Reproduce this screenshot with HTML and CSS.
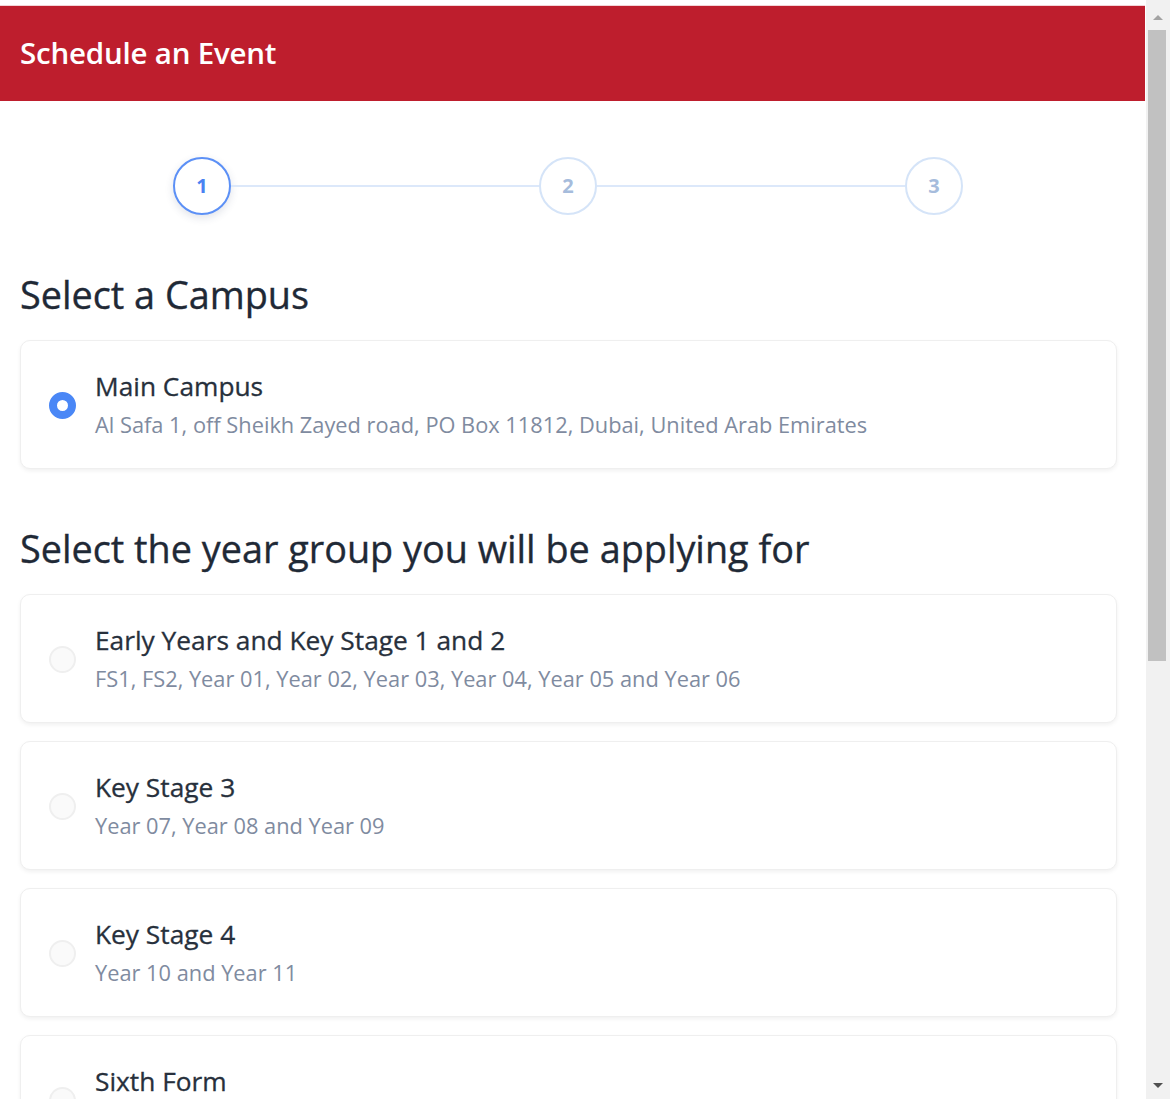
FILE: index.html
```html
<!DOCTYPE html>
<html lang="en">
<head>
<meta charset="utf-8">
<title>Schedule an Event</title>
<link rel="stylesheet" href="styles.css">
</head>
<body>
<div class="window">
  <div class="main">
    <header class="header">
      <h1 class="header-title">Schedule an Event</h1>
    </header>
    <div class="content">
      <div class="stepper">
        <div class="step step-active">1</div>
        <div class="step-line"></div>
        <div class="step">2</div>
        <div class="step-line"></div>
        <div class="step">3</div>
      </div>

      <h2 class="section-title section-title-first">Select a Campus</h2>
      <div class="card">
        <span class="radio radio-checked"></span>
        <div class="card-text">
          <div class="card-title">Main Campus</div>
          <div class="card-sub">Al Safa 1, off Sheikh Zayed road, PO Box 11812, Dubai, United Arab Emirates</div>
        </div>
      </div>

      <h2 class="section-title section-title-second">Select the year group you will be applying for</h2>
      <div class="card-list">
        <div class="card">
          <span class="radio"></span>
          <div class="card-text">
            <div class="card-title">Early Years and Key Stage 1 and 2</div>
            <div class="card-sub">FS1, FS2, Year 01, Year 02, Year 03, Year 04, Year 05 and Year 06</div>
          </div>
        </div>
        <div class="card">
          <span class="radio"></span>
          <div class="card-text">
            <div class="card-title">Key Stage 3</div>
            <div class="card-sub">Year 07, Year 08 and Year 09</div>
          </div>
        </div>
        <div class="card">
          <span class="radio"></span>
          <div class="card-text">
            <div class="card-title">Key Stage 4</div>
            <div class="card-sub">Year 10 and Year 11</div>
          </div>
        </div>
        <div class="card">
          <span class="radio"></span>
          <div class="card-text">
            <div class="card-title">Sixth Form</div>
            <div class="card-sub">Year 12 and Year 13</div>
          </div>
        </div>
      </div>
    </div>
  </div>
  <div class="scrollbar">
    <div class="sb-arrow sb-up"></div>
    <div class="sb-track"><div class="sb-thumb"></div></div>
    <div class="sb-arrow sb-down"></div>
  </div>
</div>
</body>
</html>
```

FILE: styles.css
```css
* { box-sizing: border-box; }
html, body { margin: 0; padding: 0; }
body {
  background: #ffffff;
  font-family: "Open Sans", "Noto Sans", "Liberation Sans", sans-serif;
  color: #222c3a;
}
.window {
  display: flex;
  width: 1170px;
  height: 1099px;
  overflow: hidden;
}
.main {
  width: 1146px;
  flex: none;
  padding-top: 6px;
  overflow: hidden;
}
.header {
  background: #be1e2d;
  height: 95px;
  width: 1145px;
  display: flex;
  align-items: center;
  padding-left: 20px;
  padding-bottom: 2px;
  box-shadow: 0 -1px 0 #f3d3d6;
}
.header-title {
  margin: 0;
  color: #ffffff;
  font-size: 29.5px;
  font-weight: 600;
  letter-spacing: -0.2px;
}
.content {
  padding: 0 29px 0 20px;
}
.stepper {
  display: flex;
  align-items: center;
  width: 790px;
  margin: 56px 0 0 153px;
}
.step {
  width: 58px;
  height: 58px;
  border-radius: 50%;
  border: 2px solid #d5e4f8;
  display: flex;
  align-items: center;
  justify-content: center;
  font-size: 20px;
  font-weight: 700;
  color: #a6bcdc;
  background: #fff;
  flex: none;
  padding-bottom: 2px;
}
.step-active {
  border-color: #5c90f6;
  color: #4a82f2;
  box-shadow: 0 3px 8px rgba(40, 60, 100, 0.14);
}
.step-line {
  flex: 1;
  height: 2px;
  background: #dce8fa;
}
.section-title {
  margin: 0;
  font-size: 37.8px;
  font-weight: 400;
  line-height: 46px;
  color: #1f2936;
  -webkit-text-stroke: 0.35px #1f2936;
}
.section-title-first { margin-top: 57px; margin-bottom: 22px; }
.section-title-second { margin-top: 57px; margin-bottom: 22px; }
.card-list {
  display: flex;
  flex-direction: column;
  gap: 18px;
}
.card {
  display: flex;
  align-items: center;
  gap: 19px;
  width: 1097px;
  height: 129px;
  padding: 0 28px 2px;
  border: 1px solid #efefef;
  border-radius: 10px;
  background: #fff;
  box-shadow: 0 2px 4px rgba(0, 0, 0, 0.06);
}
.card-text {
  display: flex;
  flex-direction: column;
}
.card-title {
  font-size: 26.3px;
  font-weight: 400;
  line-height: 34px;
  color: #27303c;
  -webkit-text-stroke: 0.3px #27303c;
}
.card-sub {
  margin-top: 8px;
  font-size: 21.8px;
  line-height: 28px;
  color: #7f8ba0;
}
.radio {
  width: 27px;
  height: 27px;
  margin-top: 4px;
  border-radius: 50%;
  border: 2px solid #efefef;
  background: #fafafa;
  flex: none;
}
.radio-checked {
  border: 8px solid #4a87f6;
  background: #fff;
}
.scrollbar {
  width: 24px;
  flex: none;
  background: #f1f1f1;
  display: flex;
  flex-direction: column;
  align-items: center;
}
.sb-arrow {
  width: 0;
  height: 0;
  border-left: 5px solid transparent;
  border-right: 5px solid transparent;
  flex: none;
}
.sb-up {
  margin-top: 15px;
  border-bottom: 5px solid #a3a3a3;
}
.sb-down {
  margin-bottom: 11px;
  border-top: 5px solid #505050;
}
.sb-track {
  flex: 1;
  width: 100%;
  padding: 10px 4px 0 2px;
}
.sb-thumb {
  width: 18px;
  height: 631px;
  background: #c1c1c1;
}
```
